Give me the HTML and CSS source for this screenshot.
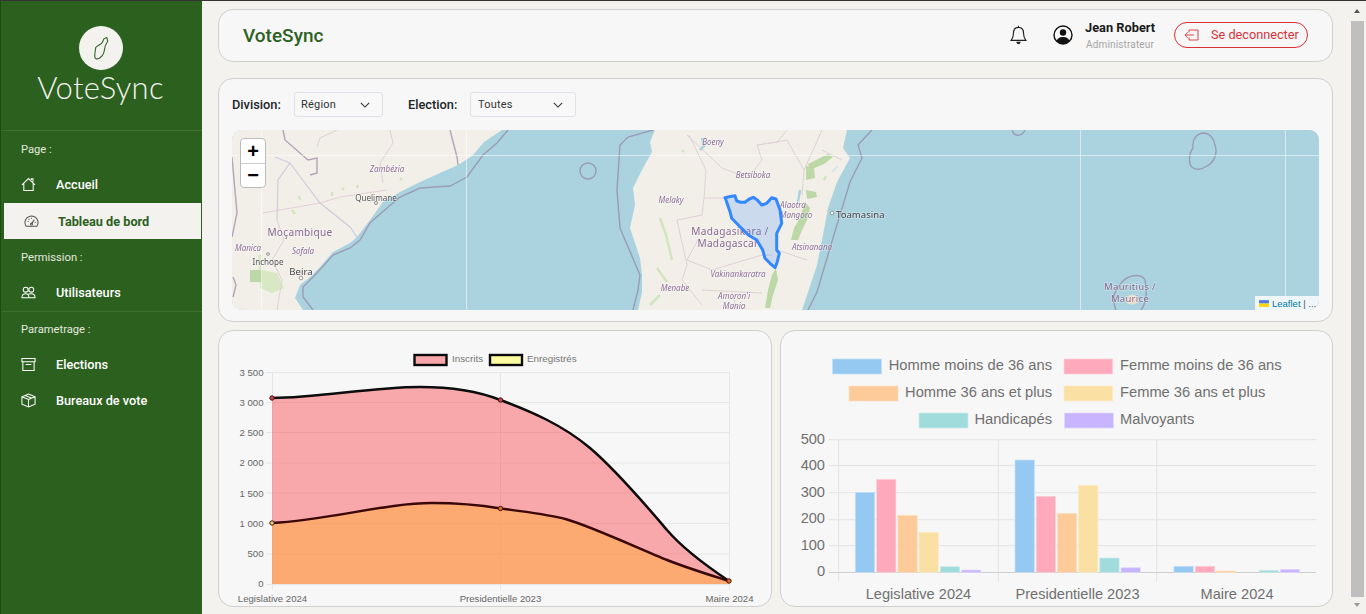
FILE: index.html
```html
<!DOCTYPE html>
<html lang="fr">
<head>
<meta charset="utf-8">
<title>VoteSync</title>
<link rel="stylesheet" href="styles.css">
</head>
<body>
<div class="topline"></div>
<div class="app">
  <aside class="sidebar">
    <div class="brand">
      <div class="brand-circle">
        <svg class="brand-map" viewBox="0 0 16 26"><path d="M14 1.5 L15 5.5 L12.5 10 L11 17 C9.5 22.5 4 25 2 23 C0.5 20 2.5 15 2.5 12 C4.5 9.5 8 9 9.5 6.5 L11 3 Z"/></svg>
      </div>
      <div class="brand-name">VoteSync</div>
    </div>
    <div class="nav-section first">
      <div class="nav-label">Page :</div>
      <a class="nav-item">
        <svg class="ico" viewBox="0 0 16 16"><path d="M1 8.5 L8 1.7 L15 8.5 M3 7 V14.5 H13 V7 M11 3.2 V1.8 H12.8 V5"/></svg>
        <span>Accueil</span>
      </a>
      <a class="nav-item active">
        <svg class="ico" viewBox="0 0 16 16"><path d="M2.2 13 A7 7 0 1 1 13.8 13 Z M8 10.5 L11 6 M8 4 V5 M4 8 H5 M11.5 9 H12.6 M5 5.2 L5.7 6"/><circle cx="8" cy="10.7" r="1.1"/></svg>
        <span>Tableau de bord</span>
      </a>
      <div class="nav-label second">Permission :</div>
      <a class="nav-item">
        <svg class="ico" viewBox="0 0 16 16"><circle cx="5" cy="5" r="2.6"/><circle cx="11" cy="5" r="2.6"/><path d="M1 13.5 C1 10 3 9.3 5 9.3 C7 9.3 8.5 10.5 8.5 13.5 Z M8 9.6 C9 9.3 10 9.3 11 9.3 C13 9.3 15 10 15 13.5 H8.5"/></svg>
        <span>Utilisateurs</span>
      </a>
    </div>
    <div class="nav-section">
      <div class="nav-label">Parametrage :</div>
      <a class="nav-item">
        <svg class="ico" viewBox="0 0 16 16"><path d="M1 1.5 H15 V5 H1 Z M2 5 V14.5 H14 V5 M5 8 H11"/></svg>
        <span>Elections</span>
      </a>
      <a class="nav-item">
        <svg class="ico" viewBox="0 0 16 16"><path d="M8 1 L15 4 V12 L8 15 L1 12 V4 Z M1 4 L8 7 L15 4 M8 7 V15 M4.5 2.6 L11.5 5.6"/></svg>
        <span>Bureaux de vote</span>
      </a>
    </div>
  </aside>

  <main class="main">
    <header class="card header">
      <div class="title">VoteSync</div>
      <div class="header-right">
        <svg class="bell" viewBox="0 0 16 19"><path d="M8 2.2 C4.5 2.2 3.2 5 3.2 8 C3.2 11 2.2 13 1 14.6 H15 C13.8 13 12.8 11 12.8 8 C12.8 5 11.5 2.2 8 2.2 Z M8 2.2 V0.8"/><path class="solid" d="M6 16 H10 C10 17.5 9 18.3 8 18.3 C7 18.3 6 17.5 6 16 Z"/></svg>
        <svg class="avatar" viewBox="0 0 20 20"><circle class="ring" cx="10" cy="10" r="9"/><circle cx="10" cy="7.5" r="3.2"/><path d="M3.6 15.8 C5 12.5 7.5 12 10 12 C12.5 12 15 12.5 16.4 15.8 C14.5 18 12.5 19 10 19 C7.5 19 5.5 18 3.6 15.8 Z"/></svg>
        <div class="user">
          <div class="user-name">Jean Robert</div>
          <div class="user-role">Administrateur</div>
        </div>
        <a class="logout">
          <svg class="logout-ico" viewBox="0 0 15 12"><path d="M5 3.5 V1 H14 V11 H5 V8.5 M10 6 H1 M3.8 3.3 L1 6 L3.8 8.7"/></svg>
          <span>Se deconnecter</span>
        </a>
      </div>
    </header>

    <section class="card filters">
      <div class="filter-row">
        <label class="filter-label">Division:</label>
        <div class="select select-a"><span>Région</span><svg class="chev" viewBox="0 0 12 7"><path d="M1 1 L6 6 L11 1"/></svg></div>
        <label class="filter-label second">Election:</label>
        <div class="select select-b"><span>Toutes</span><svg class="chev" viewBox="0 0 12 7"><path d="M1 1 L6 6 L11 1"/></svg></div>
      </div>
      <div class="map">
        <svg class="map-svg" viewBox="0 0 1087 180">
          <g class="tiles">
            <rect class="sea" width="1087" height="180"/>
            <path class="land" d="M0 0 H270 L252 12 L240 26 L226 35 L208 43 L188 52 L168 62 L151 72 L138 90 L125 107 L118 113 L101 122 L88 137 L78 147 L68 155 L63 168 L71 180 H0 Z"/>
            <path class="land" d="M423 0 L418 12 L420 22 L411 38 L401 58 L403 75 L398 98 L408 128 L410 145 L410 162 L406 180 H570 L576 162 L585 135 L591 105 L596 78 L605 52 L618 28 L611 18 L615 0 Z"/>
            <path class="forest" d="M26 125 L30 125 L30 140 L45 143 L52 158 L40 163 L28 158 Z"/>
            <path class="forest-d" d="M18 140 H30 V152 H18 Z"/>
            <path class="forest-d" d="M596 24 L601 27 L592 34 L585 37 L578 40 L576 34 L584 30 Z M574 36 L582 38 L583 48 L574 50 Z M574 60 L584 62 L585 67 L575 69 Z M573 72 L578 78 L575 90 L570 100 L566 110 L559 110 L562 98 L568 88 Z M544 138 L546 150 L541 165 L538 178 L533 178 L536 160 L540 145 Z"/>
            <path class="forest-line thin" d="M428 88 L434 105 L440 130 M425 138 L435 152 M418 175 L428 165 M450 20 L452 22 M592 50 L594 46"/>
            <path class="forest-line thin" d="M67 66 L68 70 M110 58 L112 60 M125 55 L126 58 M100 62 L100 66 M60 80 L63 84 M168 48 L170 50"/>
            <path class="lake" d="M470 8 L472 16 L468 20 M568 60 L566 72"/>
            <path class="region" d="M105 0 L88 8 L85 17 M158 0 L161 13 L148 33 L151 53 M31 83 L88 73 L108 67 L155 60 M45 90 L52 110 L40 130 L50 150 L45 180"/>
            <path class="region" d="M455 5 L490 38 L516 48 L530 30 L525 15 L545 12 L555 0 M525 15 L545 12 L555 10 L572 40 L570 65 M457 5 L474 40 L472 68 L494 68 M445 90 L470 85 L472 68 M445 90 L455 135 L450 150 M467 108 L455 130 L480 140 L530 125 L540 125 M450 150 L470 175 M470 160 L530 163 M500 163 L505 180 M530 125 L545 138 M545 120 L575 130 M572 40 L590 0 M590 20 L610 30"/>
            <path class="border" d="M51 0 L53 10 L76 30 L85 28 L85 43 L78 45 M218 0 L225 27 L226 35 M0 27 L5 83 L0 107 M1 147 L4 155 L1 167"/>
            <path class="border-soft" d="M43 27 L58 33 L46 50 L45 90 M58 33 L88 73 L118 97 L125 107"/>
            <path class="maritime" d="M276 0 L265 13 L251 25 L235 47 L218 56 L188 58 L168 67 L155 78 L138 93 L128 110 L118 118 L101 125 L85 143 L71 157 L71 167 L81 180"/>
            <path class="maritime" d="M421 0 L396 7 L388 15 L385 60 L388 98 L408 145 L406 160 L401 180 M640 0 L626 15 L630 28 L618 52 L601 108 L585 162 L576 180"/>
            <path class="maritime" d="M780 0 C782 7 790 7 793 0 M971 3 C978 3 982 9 983 15 C986 24 982 32 975 36 C968 41 960 40 958 34 C957 28 957 23 961 18 C960 10 964 4 971 3 Z M884 180 C879 168 882 160 892 150 C900 144 910 144 913 150 C915 160 915 172 909 180"/>
            <circle class="maritime" cx="356" cy="41" r="8"/>
            <path class="reef" d="M600 42 L606 36"/>
            <path class="mauritius" d="M893 170 C895 163 905 163 907 170 C905 176 895 176 893 170 Z"/>
            <rect class="gridw" x="0" y="25" width="1087" height="1"/>
            <rect class="gridw" x="29" y="0" width="1" height="180"/>
            <rect class="gridw" x="234" y="0" width="1" height="180"/>
            <rect class="gridw" x="848" y="0" width="1" height="180"/>
            <rect class="gridw" x="1053" y="0" width="1" height="180"/>

            <text class="ml it" x="155" y="38">Zambézia</text>
            <text class="ml city s" x="144" y="67">Quelimane</text>
            <circle class="dot" cx="144" cy="73" r="1.6"/>
            <text class="ml country" x="68" y="102">Moçambique</text>
            <text class="ml it" x="16" y="117">Manica</text>
            <text class="ml it" x="71" y="120">Sofala</text>
            <text class="ml city s" x="36" y="131">Inchope</text>
            <circle class="dot" cx="36" cy="124" r="1.4"/>
            <text class="ml city" x="69" y="141">Beira</text>
            <circle class="dot white" cx="69" cy="148" r="1.8"/>
            <text class="ml it" x="481" y="11">Boeny</text>
            <text class="ml it" x="521" y="44">Betsiboka</text>
            <text class="ml it" x="439" y="69">Melaky</text>
            <text class="ml it" x="561" y="74">Alaotra</text>
            <text class="ml it" x="564" y="84">Mangoro</text>
            <text class="ml it" x="580" y="116">Atsinanana</text>
            <text class="ml it" x="506" y="143">Vakinankaratra</text>
            <text class="ml it" x="443" y="157">Menabe</text>
            <text class="ml it" x="502" y="165">Amoron'i</text>
            <text class="ml it" x="502" y="175">Mania</text>
            <text class="ml country" x="498" y="101">Madagasikara /</text>
            <text class="ml country" x="496" y="113">Madagascar</text>
            <text class="ml city start" x="604" y="84">Toamasina</text>
            <circle class="dot white" cx="600" cy="83" r="1.8"/>
            <text class="ml country small" x="898" y="156">Mauritius /</text>
            <text class="ml country small" x="898" y="168">Maurice</text>
          </g>
          <path class="region-shape" d="M493 67.7 L497.3 66.7 L503 65.7 L504.7 71 L508.7 72.3 L513 72.3 L517.3 69 L521.3 67.3 L525.3 70 L529.7 75 L534.7 73.3 L539.7 67.7 L544 69 L548 80 L549.7 93.3 L544.7 103.3 L544.7 120 L547.3 123.3 L545.3 131.7 L543 137.7 L538 133.3 L533 128.3 L530.7 120 L524.7 110 L516.3 105 L508 96.7 L499.7 88.3 L498 81.7 L494 70 Z"/>
        </svg>
        <div class="zoom">
          <div class="zoom-btn">+</div>
          <div class="zoom-btn">−</div>
        </div>
        <div class="attrib">
          <svg class="flag" viewBox="0 0 12 8"><rect class="flag-b" width="12" height="4"/><rect class="flag-y" y="4" width="12" height="4"/></svg>
          <span class="attrib-link">Leaflet</span><span class="attrib-rest"> | ...</span>
        </div>
      </div>
    </section>

    <div class="charts">
      <section class="card chart chart-left">
        <svg class="chart-svg" viewBox="0 0 552 275">
          <g transform="translate(-219 -331)">
            <path class="grid" d="M272 372.5 H729.5 M266 402.5 H729.5 M266 432.5 H729.5 M266 463 H729.5 M266 493 H729.5 M266 523.5 H729.5 M266 554 H729.5 M266 372.5 H272 M272.5 372 V590 M500.5 372 V590 M729.5 372 V590 M266 584.5 H729.5"/>
            <path class="fill-a" d="M272 398 C320 398 370 387 420 387 C450 387 480 392 500.5 400 C530 411 563 425 590 448 C617 471 650 510 667 530 C684 550 708 567 729 581 V584 H272 Z"/>
            <path class="fill-b" d="M272 523 C330 520 385 503 432 503 C458 503 480 505 500.5 508.5 C525 512 548 514 567 519.5 C590 526 640 549 667 560 C690 569 710 575 729 581 V584 H272 Z"/>
            <path class="line" d="M272 398 C320 398 370 387 420 387 C450 387 480 392 500.5 400 C530 411 563 425 590 448 C617 471 650 510 667 530 C684 550 708 567 729 581"/>
            <path class="line dark" d="M272 523 C330 520 385 503 432 503 C458 503 480 505 500.5 508.5 C525 512 548 514 567 519.5 C590 526 640 549 667 560 C690 569 710 575 729 581"/>
            <circle class="pt red" cx="272" cy="398" r="2.2"/>
            <circle class="pt red" cx="500.5" cy="400" r="2.2"/>
            <circle class="pt yel" cx="272" cy="523" r="2.2"/>
            <circle class="pt org" cx="500.5" cy="508.5" r="2.2"/>
            <circle class="pt org" cx="729" cy="581" r="2.2"/>
            <rect class="sw sw-a" x="414.5" y="355" width="32" height="10"/>
            <text class="lg" x="452" y="362">Inscrits</text>
            <rect class="sw sw-b" x="490" y="355" width="32" height="10"/>
            <text class="lg" x="527" y="362">Enregistrés</text>
            <text class="ax end" x="263.5" y="375.5">3 500</text>
            <text class="ax end" x="263.5" y="405.5">3 000</text>
            <text class="ax end" x="263.5" y="436">2 500</text>
            <text class="ax end" x="263.5" y="466">2 000</text>
            <text class="ax end" x="263.5" y="496.5">1 500</text>
            <text class="ax end" x="263.5" y="526.5">1 000</text>
            <text class="ax end" x="263.5" y="557">500</text>
            <text class="ax end" x="263.5" y="587">0</text>
            <text class="ax mid" x="272.5" y="602">Legislative 2024</text>
            <text class="ax mid" x="500.5" y="602">Presidentielle 2023</text>
            <text class="ax mid" x="729.5" y="602">Maire 2024</text>
          </g>
        </svg>
      </section>
      <section class="card chart">
        <svg class="chart-svg" viewBox="0 0 551 275">
          <g transform="translate(-781 -331)">
            <path class="grid2" d="M829 439.7 H1316 M829 465.5 H1316 M829 492.7 H1316 M829 519.7 H1316 M829 545.7 H1316 M838.6 439.7 V581.7 M998.3 439.7 V581.7 M1156.7 439.7 V581.7"/>
            <path class="axis2" d="M829 572.5 H1316"/>
            <g class="c1">
              <rect x="855.3" y="492.3" width="19.3" height="80"/><rect x="1015" y="460" width="19.3" height="112.3"/><rect x="1173.9" y="566.3" width="19.3" height="6"/>
            </g>
            <g class="c2">
              <rect x="876.6" y="479.3" width="19.3" height="93"/><rect x="1036.2" y="496.3" width="19.3" height="76"/><rect x="1195.2" y="566.3" width="19.3" height="6"/>
            </g>
            <g class="c3">
              <rect x="897.9" y="515.3" width="19.3" height="57"/><rect x="1057.4" y="513.3" width="19.3" height="59"/><rect x="1216.4" y="571" width="19.3" height="1.3"/>
            </g>
            <g class="c4">
              <rect x="919" y="532.3" width="19.3" height="40"/><rect x="1078.6" y="485.3" width="19.3" height="87"/>
            </g>
            <g class="c5">
              <rect x="940.3" y="566.7" width="19.3" height="5.6"/><rect x="1099.8" y="558" width="19.3" height="14.3"/><rect x="1259.2" y="570.3" width="19.3" height="2"/>
            </g>
            <g class="c6">
              <rect x="961.6" y="570" width="19.3" height="2.3"/><rect x="1121" y="567.7" width="19.3" height="4.6"/><rect x="1280.4" y="569.3" width="19.3" height="3"/>
            </g>
            <rect class="c1" x="832.5" y="359" width="49" height="15"/>
            <text class="lg2 end" x="1052" y="370">Homme moins de 36 ans</text>
            <rect class="c2" x="1064" y="359" width="48.7" height="15"/>
            <text class="lg2" x="1120" y="370">Femme moins de 36 ans</text>
            <rect class="c3" x="849" y="386" width="49" height="15"/>
            <text class="lg2 end" x="1052" y="397">Homme 36 ans et plus</text>
            <rect class="c4" x="1064" y="386" width="48.7" height="15"/>
            <text class="lg2" x="1120" y="397">Femme 36 ans et plus</text>
            <rect class="c5" x="919" y="413" width="49" height="15"/>
            <text class="lg2 end" x="1052" y="424">Handicapés</text>
            <rect class="c6" x="1064.5" y="413" width="49" height="15"/>
            <text class="lg2" x="1120" y="424">Malvoyants</text>
            <text class="ax2 end" x="825" y="443.5">500</text>
            <text class="ax2 end" x="825" y="470">400</text>
            <text class="ax2 end" x="825" y="496.5">300</text>
            <text class="ax2 end" x="825" y="523">200</text>
            <text class="ax2 end" x="825" y="549.5">100</text>
            <text class="ax2 end" x="825" y="576">0</text>
            <text class="ax2 mid" x="918.5" y="599">Legislative 2024</text>
            <text class="ax2 mid" x="1077.5" y="599">Presidentielle 2023</text>
            <text class="ax2 mid" x="1237" y="599">Maire 2024</text>
          </g>
        </svg>
      </section>
    </div>
  </main>

  <div class="scrollbar">
    <div class="arrow up"></div>
    <div class="thumb"></div>
    <div class="arrow down"></div>
  </div>
</div>
</body>
</html>
```
FILE: styles.css
```css
* { box-sizing: border-box; }
html, body { margin: 0; padding: 0; height: 100%; overflow: hidden; }
body { background: #f3f2ef; font-family: Roboto, "Liberation Sans", sans-serif; display: flex; flex-direction: column; }
.topline { height: 1px; background: #333; flex: none; }
.app { flex: 1; display: flex; min-height: 0; }

/* sidebar */
.sidebar { width: 202px; flex: none; background: #2c601f; border-left: 1px solid #1f4a16; color: #fff; }
.brand { height: 130px; display: flex; flex-direction: column; align-items: center; padding: 25px 2px 0 0; border-bottom: 1px solid #3e7130; }
.brand-circle { width: 44px; height: 44px; border-radius: 50%; background: #f3f2ef; display: flex; align-items: center; justify-content: center; }
.brand-map { width: 16px; height: 25px; }
.brand-map path { fill: none; stroke: #2c601f; stroke-width: 1.1; }
.brand-name { font-family: Lato, sans-serif; font-weight: 300; font-size: 31px; line-height: 36px; margin-top: -1px; color: #f3f2ef; letter-spacing: .3px; }
.nav-section { padding-top: 10px; }
.nav-section.first { height: 181px; padding-top: 11px; border-bottom: 1px solid #3e7130; }
.nav-label { font-size: 11.2px; line-height: 14px; padding: 1px 0 0 20px; color: #e4e7df; height: 24px; }
.nav-label.second { margin-top: 11px; }
.nav-item { display: flex; align-items: center; height: 36px; padding-left: 20px; gap: 20px; font-size: 12.7px; font-weight: 500; color: #fff; }
.nav-item .ico { width: 15px; height: 15px; flex: none; fill: none; stroke: #fff; stroke-width: 1.1; }
.nav-item.active { margin: 1px 1px 0 3px; background: #f3f2ee; color: #2c601f; font-weight: 700; gap: 19px; }
.nav-item.active .ico { stroke: #555; }

/* main */
.main { flex: 1; min-width: 0; padding: 8px 18px 0 16px; display: flex; flex-direction: column; }
.card { background: #f7f7f7; border: 1px solid #cfcfcf; border-radius: 15px; }
.header { height: 53px; flex: none; display: flex; align-items: center; justify-content: space-between; padding: 0 24px; }
.title { font-size: 19px; font-weight: 500; color: #2c601f; }
.header-right { display: flex; align-items: center; margin-bottom: 2px; }
.bell { width: 17px; height: 20px; fill: none; stroke: #222; stroke-width: 1.1; margin-right: 26px; }
.bell .solid { fill: #222; stroke: none; }
.avatar { width: 20px; height: 20px; fill: #111; margin-right: 12px; }
.avatar .ring { fill: none; stroke: #111; stroke-width: 1.4; }
.user { width: 89px; height: 32px; padding-top: 1px; }
.user-name { font-size: 12.8px; font-weight: 700; color: #1a1a1a; line-height: 16px; }
.user-role { font-size: 10px; color: #a5a5a5; line-height: 12px; margin: 3px 0 0 1px; letter-spacing: .15px; }
.logout { display: flex; align-items: center; width: 134px; height: 26px; border: 1px solid #dc2f35; border-radius: 13px; padding-left: 9px; font-size: 12.7px; color: #dc3138; gap: 12px; }
.logout-ico { width: 15px; height: 12px; flex: none; fill: none; stroke: #dc3138; stroke-width: .9; }

.filters { margin-top: 16px; height: 244px; flex: none; padding: 13px 13px 0; }
.filter-row { display: flex; align-items: center; height: 25px; }
.filter-label { font-size: 12.8px; font-weight: 500; color: #212529; width: 50px; }
.filter-label.second { margin-left: 25px; }
.select { height: 25px; margin-left: 12px; display: flex; align-items: center; justify-content: space-between; padding: 0 12px 0 7px; background: #f8f8f8; border: 1px solid #dfe2e8; border-radius: 3px; font-size: 11px; color: #333; letter-spacing: .2px; }
.select-a { width: 89px; padding-left: 6px; }
.select-b { width: 106px; }
.chev { width: 10px; height: 6px; fill: none; stroke: #333; stroke-width: 1.3; }
.map { position: relative; margin-top: 13px; height: 180px; border-radius: 10px; overflow: hidden; background: #aad3df; }
.map-svg { display: block; width: 100%; height: 100%; }
.tiles { filter: blur(.55px); }
.sea { fill: #aad3df; }
.land { fill: #f2efe9; }
.forest { fill: #d8e8c4; }
.forest-d { fill: #bcd8a6; }
.forest-line { fill: none; stroke: #c5deb0; stroke-width: 5; stroke-linejoin: round; }
.forest-line.thin { stroke-width: 2.5; stroke: #d3e5c0; }
.lake { fill: none; stroke: #aad3df; stroke-width: 2.5; }
.region { fill: none; stroke: #dfd0d7; stroke-width: 1; }
.border { fill: none; stroke: #b3a3bc; stroke-width: 1.4; }
.border-soft { fill: none; stroke: #cfcbdd; stroke-width: 1.2; }
.maritime { fill: none; stroke: #9a9cb5; stroke-width: 1.4; }
.reef { fill: none; stroke: #d8e6ea; stroke-width: 2; }
.mauritius { fill: #e8ddc9; }
.gridw { fill: #fff; opacity: .55; }
.ml { font-family: "Noto Sans", "Open Sans", sans-serif; text-anchor: middle; dominant-baseline: central; paint-order: stroke; stroke: rgba(255,255,255,.35); stroke-width: 1.5px; }
.ml.it { font-style: italic; font-size: 8px; fill: #8d6f99; }
.ml.city { font-size: 9.6px; fill: #444; }
.ml.city.s { font-size: 8.1px; fill: #555; }
.ml.start { text-anchor: start; }
.ml.country { font-size: 10.1px; letter-spacing: .3px; fill: #87688f; }
.ml.country.small { font-size: 9.5px; }
.dot { fill: #e8e5d8; stroke: #888; stroke-width: .8; }
.dot.white { fill: #fff; }
.region-shape { fill: rgba(51,136,255,.2); stroke: #3388ff; stroke-width: 3; stroke-linejoin: round; }
.zoom { position: absolute; left: 8px; top: 8px; width: 26px; background: #fff; border: 1px solid #bbb; border-radius: 4px; overflow: hidden; }
.zoom-btn { height: 24px; display: flex; align-items: center; justify-content: center; font-family: "Liberation Sans", sans-serif; font-size: 20px; font-weight: 700; color: #000; }
.zoom-btn + .zoom-btn { border-top: 1px solid #ccc; }
.attrib { position: absolute; right: 0; bottom: 0; height: 14px; width: 64px; padding-left: 4px; display: flex; align-items: center; background: rgba(255,255,255,.8); font-family: "Liberation Sans", sans-serif; font-size: 9.5px; white-space: pre; }
.flag { width: 10px; height: 7px; margin-right: 3px; }
.flag-b { fill: #4c7be1; }
.flag-y { fill: #ffd500; }
.attrib-link { color: #0078a8; }
.attrib-rest { color: #555; }

.charts { margin-top: 8px; display: flex; gap: 8px; flex: none; height: 277px; }
.chart { flex: 1; min-width: 0; overflow: hidden; }
.chart-left { flex: none; width: 554px; }
.chart-svg { display: block; width: 100%; height: 100%; }
.grid { fill: none; stroke: #e6e6e6; stroke-width: 1; }
.fill-a { fill: rgba(249,80,85,.48); }
.fill-b { fill: rgba(255,173,56,.5); }
.line { fill: none; stroke: #0c0c0c; stroke-width: 2.5; }
.line.dark { stroke: #3a0808; }
.pt { stroke: #4a1210; stroke-width: 1; }
.pt.red { fill: #c84a48; }
.pt.yel { fill: #e6d46a; }
.pt.org { fill: #d8702c; }
.sw { stroke: #0a0a0a; stroke-width: 2.4; }
.sw-a { fill: #f9a6a9; }
.sw-b { fill: #fbfb9f; }
.lg { font-family: "Liberation Sans", sans-serif; font-size: 9.8px; fill: #757575; }
.ax { font-family: "Liberation Sans", sans-serif; font-size: 9.6px; fill: #666; }
.end { text-anchor: end; }
.mid { text-anchor: middle; }
.grid2 { fill: none; stroke: #e3e3e3; stroke-width: 1; }
.axis2 { fill: none; stroke: #cfcfcf; stroke-width: 1; }
.c1, .c1 rect { fill: #95c9f1; stroke: #c3e0f6; stroke-width: .7; }
.c2, .c2 rect { fill: #fea9bc; stroke: #ffd0da; stroke-width: .7; }
.c3, .c3 rect { fill: #fdca9a; stroke: #fde0c4; stroke-width: .7; }
.c4, .c4 rect { fill: #fbe0a4; stroke: #fcecc8; stroke-width: .7; }
.c5, .c5 rect { fill: #a1dcdc; stroke: #c8ecec; stroke-width: .7; }
.c6, .c6 rect { fill: #c9b4ff; stroke: #e2d8ff; stroke-width: .7; }
.lg2 { font-family: "Liberation Sans", sans-serif; font-size: 14.7px; fill: #707070; }
.ax2 { font-family: "Liberation Sans", sans-serif; font-size: 14.6px; fill: #707070; }

/* page scrollbar */
.scrollbar { width: 15px; flex: none; background: #f3f2ef; display: flex; flex-direction: column; align-items: flex-start; }
.thumb { width: 13px; flex: 1; background: #bfbfbf; }
.arrow { height: 20px; width: 13px; flex: none; position: relative; }
.arrow::after { content: ""; position: absolute; left: 3px; border-left: 3.5px solid transparent; border-right: 3.5px solid transparent; }
.arrow.up::after { top: 8px; border-bottom: 4px solid #555; }
.arrow.down { height: 17px; }
.arrow.down::after { top: 6px; border-top: 4px solid #999; }
```
